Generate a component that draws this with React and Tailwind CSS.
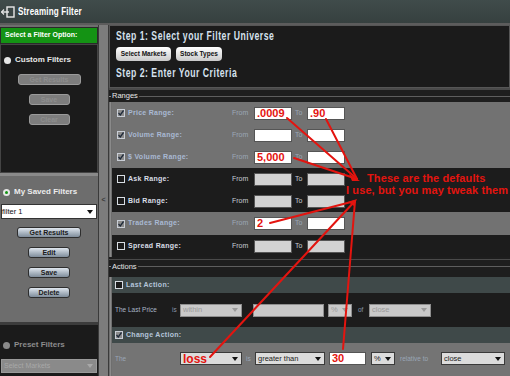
import React from "react";

function Check({ checked, light }) {
  return (
    <span
      className={`flex h-[8px] w-[8px] shrink-0 items-center justify-center border ${
        light ? "border-[#c9ced6] bg-[#8c8c8c]" : "border-[#d8dde3] bg-[#1c1c1c]"
      }`}
    >
      {checked && (
        <svg width="6" height="6" viewBox="0 0 6 6">
          <path d="M0.5 3 L2.3 5 L5.5 0.5" stroke="#1f2a3a" strokeWidth="1.3" fill="none" />
        </svg>
      )}
    </span>
  );
}

function Select({ text, w, disabled, red }) {
  return (
    <div
      className={`flex h-[13px] shrink-0 items-center justify-between border pl-[2px] pr-[3px] ${w} ${
        disabled
          ? "border-[#8f8f8f] bg-[#c9c9c9] text-[#9a9a9a]"
          : "border-[#3a3a3a] bg-[#dcdcdc] text-[#222]"
      }`}
    >
      <span
        className={
          red
            ? "text-[12px] font-bold leading-none text-[#e4130f]"
            : "text-[7.5px] leading-none"
        }
      >
        {text}
      </span>
      <span
        className={`h-0 w-0 border-x-[3px] border-t-[4px] border-x-transparent ${
          disabled ? "border-t-[#9a9a9a]" : "border-t-[#111]"
        }`}
      />
    </div>
  );
}

function Input({ value, w = "w-[38px]", light = true }) {
  return (
    <div
      className={`flex h-[13px] shrink-0 items-center border border-[#555] pl-[2px] ${w} ${
        light ? "bg-white" : "bg-[#d2d2d2]"
      }`}
    >
      <span className="text-[11px] font-bold leading-none text-[#e4130f]">{value}</span>
    </div>
  );
}

function RangeRow({ label, dark, checked, from, to, h = "h-[22px]" }) {
  return (
    <div className={`flex items-center pl-[5px] ${h} ${dark ? "bg-[#1c1c1c]" : "bg-[#727272]"}`}>
      <Check checked={checked} light={!dark} />
      <span
        className={`ml-[3px] w-[104px] text-[7px] font-bold tracking-[0.04em] ${
          dark ? "text-[#d9dee6]" : "text-[#a9b9d2]"
        }`}
      >
        {label}
      </span>
      <span className={`w-[22px] text-[7px] ${dark ? "text-[#c6ccd4]" : "text-[#9ba7b6]"}`}>From</span>
      <Input value={from} light={!dark} />
      <span className={`w-[15px] pl-[3px] text-[7px] ${dark ? "text-[#c6ccd4]" : "text-[#9ba7b6]"}`}>To</span>
      <Input value={to} light={!dark} />
    </div>
  );
}

function SideButton({ label, w = "w-[42px]", disabled }) {
  return (
    <div
      className={`flex h-[11px] items-center justify-center rounded-[3px] border text-[7px] font-bold leading-none ${w} ${
        disabled
          ? "border-[#9a9a9a] bg-[#7d7d7d] text-[#8e8e8e]"
          : "border-[#2e2e2e] bg-gradient-to-b from-[#dfe6ee] to-[#7f8d9b] text-[#1a1a1a]"
      }`}
    >
      {label}
    </div>
  );
}

function Radio({ on, dim }) {
  return (
    <span
      className={`flex h-[7px] w-[7px] items-center justify-center rounded-full ${
        dim ? "bg-[#8a8a8a]" : "bg-[#e6e6e6]"
      }`}
    >
      {on && <span className="h-[3px] w-[3px] rounded-full bg-[#139313]" />}
    </span>
  );
}

export default function App() {
  return (
    <div className="relative h-[376px] w-[510px] overflow-hidden bg-[#6e6e6e] font-['Liberation_Sans',Arial,sans-serif]">
      {/* title bar */}
      <div className="flex h-[23px] items-center bg-gradient-to-b from-[#404c4b] to-[#36403f] pl-[1px]">
        <svg width="15" height="14" viewBox="0 0 15 14" className="mr-[2px]">
          <rect x="6" y="2" width="7" height="10" fill="none" stroke="#e8e8e8" strokeWidth="1.4" />
          <path d="M0.5 7 H8" stroke="#e8e8e8" strokeWidth="1.4" />
          <path d="M3 4.5 L0.5 7 L3 9.5" stroke="#e8e8e8" strokeWidth="1.2" fill="none" />
        </svg>
        <span className="inline-block origin-left scale-x-[0.7] text-[11.5px] font-bold tracking-[0.02em] text-white">
          Streaming Filter
        </span>
      </div>
      <div className="h-[2px] bg-[#5c5c5c]" />

      <div className="flex h-[351px]">
        {/* left panel */}
        <div className="flex w-[98px] flex-col">
          <div className="h-[2px]" />
          <div className="flex h-[17px] items-center border border-[#2a2a2a] bg-[#149314] pl-[4px]">
            <span className="text-[7px] font-bold text-white">Select a Filter Option:</span>
          </div>
          <div className="flex h-[129px] flex-col border border-[#444] bg-[#1b1b1b]">
            <div className="mt-[9px] flex items-center gap-[4px] pl-[3px]">
              <Radio />
              <span className="text-[8px] font-bold text-[#e8e8e8]">Custom Filters</span>
            </div>
            <div className="mt-[8px] flex flex-col items-center gap-[9px]">
              <SideButton label="Get Results" w="w-[63px]" disabled />
              <SideButton label="Save" w="w-[41px]" disabled />
              <SideButton label="Clear" w="w-[41px]" disabled />
            </div>
          </div>
          <div className="h-[3px] bg-[#8a8a8a]" />
          <div className="flex h-[146px] flex-col bg-[#6d6d6d]">
            <div className="mt-[10px] flex items-center gap-[4px] pl-[3px]">
              <Radio on />
              <span className="text-[8px] font-bold text-[#ececec]">My Saved Filters</span>
            </div>
            <div className="mx-[1px] mt-[6px] flex h-[15px] items-center justify-between border border-[#333] bg-white pr-[3px]">
              <span className="text-[7.5px] text-[#111]">filter 1</span>
              <span className="h-0 w-0 border-x-[3px] border-t-[4px] border-x-transparent border-t-[#111]" />
            </div>
            <div className="mt-[8px] flex flex-col items-center gap-[9px]">
              <SideButton label="Get Results" w="w-[64px]" />
              <SideButton label="Edit" />
              <SideButton label="Save" />
              <SideButton label="Delete" />
            </div>
          </div>
          <div className="h-[3px] bg-[#3c3c3c]" />
          <div className="flex flex-1 flex-col bg-[#1b1b1b]">
            <div className="mt-[14px] flex items-center gap-[4px] pl-[3px]">
              <Radio dim />
              <span className="text-[8px] font-bold text-[#8c8c8c]">Preset Filters</span>
            </div>
            <div className="mx-[1px] mt-[8px] flex h-[14px] items-center justify-between border border-[#9a9a9a] bg-[#8a8a8a] pl-[2px] pr-[3px]">
              <span className="text-[7px] text-[#a8a8a8]">Select Markets</span>
              <span className="h-0 w-0 border-x-[3px] border-t-[4px] border-x-transparent border-t-[#a8a8a8]" />
            </div>
          </div>
        </div>

        {/* divider */}
        <div className="flex w-[11px] items-center justify-center border-x border-[#3a3a3a] bg-[#7c7c7c]">
          <span className="text-[7px] font-bold text-[#3a3a3a]">&lt;</span>
        </div>

        {/* right panel */}
        <div className="flex flex-1 flex-col">
          <div className="flex h-[63px] flex-col border border-[#565656] bg-[#1b1b1b] pl-[6px]">
            <span className="mt-[4px] block h-[12px] origin-left scale-x-[0.72] whitespace-nowrap text-[12px] font-bold leading-[12px] tracking-[0.06em] text-[#d6e2ee]">
              Step 1: Select your Filter Universe
            </span>
            <div className="mt-[5px] flex gap-[5px]">
              <div className="flex h-[14px] w-[55px] items-center justify-center rounded-[4px] bg-gradient-to-b from-white to-[#c9c9c9] text-[6.5px] font-bold text-[#111]">
                Select Markets
              </div>
              <div className="flex h-[14px] w-[46px] items-center justify-center rounded-[4px] bg-gradient-to-b from-white to-[#c9c9c9] text-[6.5px] font-bold text-[#111]">
                Stock Types
              </div>
            </div>
            <span className="mt-[6px] block h-[12px] origin-left scale-x-[0.72] whitespace-nowrap text-[12px] font-bold leading-[12px] tracking-[0.06em] text-[#d6e2ee]">
              Step 2: Enter Your Criteria
            </span>
          </div>

          {/* ranges fieldset */}
          <div className="flex h-[14px] items-center border-t-[2px] border-[#4a4a4a] bg-[#1e1e1e]">
            <span className="h-px w-[2px] bg-[#8a8a8a]" />
            <span className="px-[1px] text-[7.5px] leading-none text-[#e8e8e8]">Ranges</span>
            <span className="h-px flex-1 bg-[#5e5e5e]" />
          </div>
          <div className="ml-[1px] flex flex-col border-l border-[#8a8a8a] pl-[1px]">
            <RangeRow label="Price Range:" checked from=".0009" to=".90" />
            <RangeRow label="Volume Range:" checked />
            <RangeRow label="$ Volume Range:" checked from="5,000" />
            <RangeRow label="Ask Range:" dark />
            <RangeRow label="Bid Range:" dark />
            <RangeRow label="Trades Range:" checked from="2" h="h-[23px]" />
            <RangeRow label="Spread Range:" dark />
          </div>

          {/* actions fieldset */}
          <div className="flex h-[20px] flex-col bg-[#1e1e1e]">
            <div className="mt-[2px] h-px bg-[#4a4a4a]" />
            <div className="mt-[3px] flex items-center">
              <span className="h-px w-[2px] bg-[#8a8a8a]" />
              <span className="px-[1px] text-[7.5px] leading-none text-[#e8e8e8]">Actions</span>
              <span className="h-px flex-1 bg-[#5e5e5e]" />
            </div>
          </div>
          <div className="ml-[1px] flex flex-1 flex-col border-l border-[#8a8a8a] pl-[1px]">
            <div className="flex h-[16px] items-center gap-[3px] bg-[#3f4949] pl-[3px]">
              <Check />
              <span className="text-[7px] font-bold tracking-[0.04em] text-[#b5c5da]">Last Action:</span>
            </div>
            <div className="flex h-[34px] items-center bg-[#1c1c1c] pl-[3px]">
              <span className="w-[57px] text-[6.5px] text-[#a9b6c6]">The Last Price</span>
              <span className="w-[8px] text-[6.5px] text-[#8896a8]">is</span>
              <Select text="within" w="w-[62px]" disabled />
              <div className="ml-[11px] h-[13px] w-[71px] border border-[#8f8f8f] bg-[#c9c9c9]" />
              <div className="ml-[4px]">
                <Select text="%" w="w-[24px]" disabled />
              </div>
              <span className="w-[17px] pl-[6px] text-[6.5px] text-[#8896a8]">of</span>
              <Select text="close" w="w-[62px]" disabled />
            </div>
            <div className="flex h-[16px] items-center gap-[3px] bg-[#3f4949] pl-[3px]">
              <Check checked light />
              <span className="text-[7px] font-bold tracking-[0.04em] text-[#b5c5da]">Change Action:</span>
            </div>
            <div className="flex flex-1 items-center bg-[#747474] pb-[2px] pl-[3px]">
              <span className="w-[65px] text-[6.5px] text-[#9aa6b6]">The</span>
              <Select text="loss" w="w-[62px]" red />
              <span className="w-[13px] pl-[4px] text-[6.5px] text-[#9aa6b6]">is</span>
              <Select text="greater than" w="w-[70px]" />
              <div className="ml-[4px]">
                <Input value="30" w="w-[37px]" />
              </div>
              <div className="ml-[5px]">
                <Select text="%" w="w-[24px]" />
              </div>
              <span className="w-[46px] pl-[5px] text-[6.5px] text-[#9aa6b6]">relative to</span>
              <Select text="close" w="w-[64px]" />
            </div>
          </div>
        </div>
      </div>

      {/* annotation overlay */}
      <svg className="pointer-events-none absolute left-0 top-0" width="510" height="376">
        <g stroke="#e3140f" strokeWidth="2" strokeLinecap="round">
          <line x1="287" y1="118" x2="357" y2="179" />
          <line x1="326" y1="119" x2="357" y2="179" />
          <line x1="294" y1="158" x2="357" y2="179" />
          <line x1="270" y1="223" x2="355" y2="201" />
          <line x1="210" y1="357" x2="355" y2="201" />
          <line x1="343" y1="349" x2="355" y2="201" />
        </g>
        <path d="M360 181 L349 174 L352 181 Z" fill="#e3140f" />
        <path d="M357 199 L348 202 L354 206 Z" fill="#e3140f" />
      </svg>
      <div className="pointer-events-none absolute left-[346px] top-[172px] flex flex-col whitespace-nowrap text-[11px] font-bold leading-[12px] tracking-[0.01em] text-[#e3140f]">
        <span className="pl-[21px]">These are the defaults</span>
        <span>I use, but you may tweak them</span>
      </div>
    </div>
  );
}
